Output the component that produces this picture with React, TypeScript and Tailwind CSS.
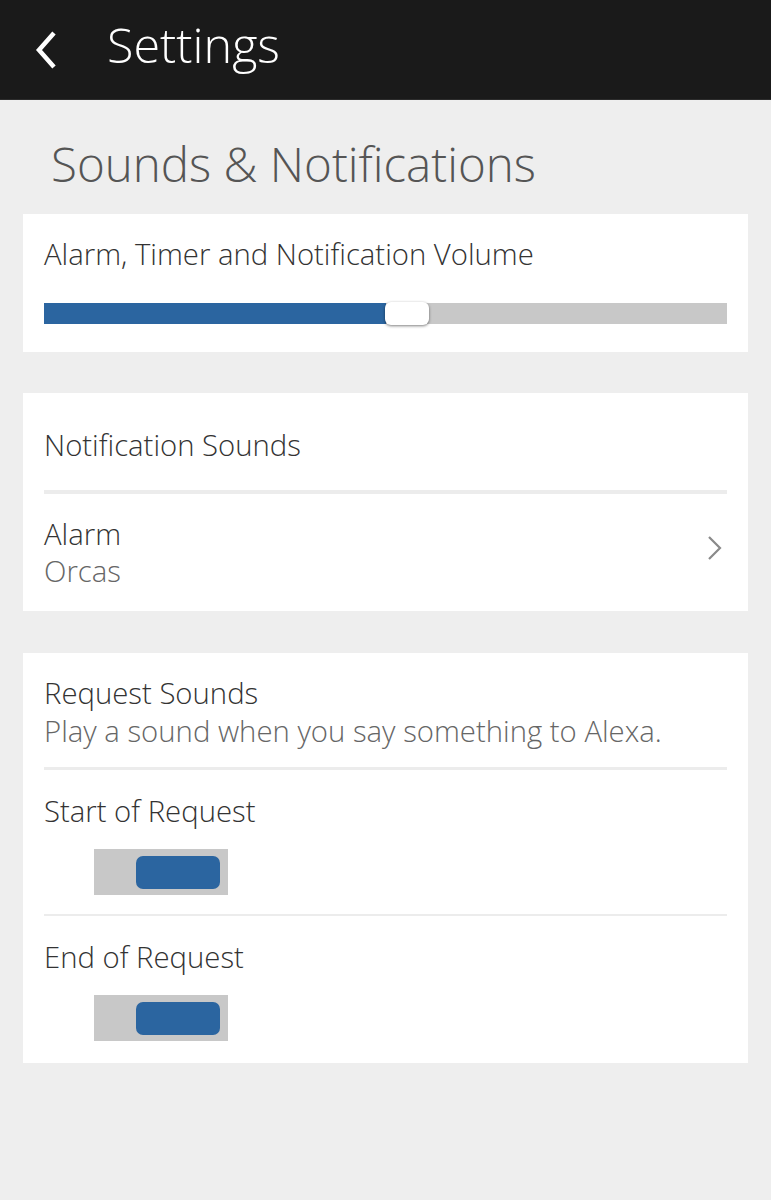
import React, { useState } from 'react';

const font = { fontFamily: '"Open Sans", "Noto Sans", sans-serif' };

const Toggle = ({ on, onClick }: { on: boolean; onClick: () => void }) => (
  <button
    onClick={onClick}
    className="ml-[50px] flex h-[46px] w-[134px] items-center bg-[#c8c8c8] px-[8px]"
  >
    <span
      className={
        'h-[33px] w-[84px] rounded-[7px] ' + (on ? 'ml-auto bg-[#2b65a0]' : 'bg-white')
      }
    />
  </button>
);

export default function App() {
  const [volume] = useState(50);
  const [startOn, setStartOn] = useState(true);
  const [endOn, setEndOn] = useState(true);

  return (
    <div className="min-h-[1200px] bg-[#eeeeee] font-light" style={font}>
      {/* header */}
      <div className="flex h-[100px] items-start border-b border-[#2c2c2c] bg-[#1a1a1a] pt-[13px]">
        <svg width="24" height="38" viewBox="0 0 24 38" className="ml-[34px] mt-[18px]">
          <path d="M20 2 L5 19 L20 36" fill="none" stroke="white" strokeWidth="4.5" />
        </svg>
        <h1 className="ml-[49px] text-[48.5px] leading-[62px] text-white">Settings</h1>
      </div>

      <h2 className="ml-[51px] mt-[33px] text-[47.5px] leading-[62px] text-[#555555]">
        Sounds &amp; Notifications
      </h2>

      {/* volume */}
      <div className="mx-[23px] mt-[19px] bg-white px-[21px] pt-[21px] pb-[28px]">
        <div className="text-[29.3px] leading-[38px] text-[#333333]">
          Alarm, Timer and Notification Volume
        </div>
        <div className="mt-[30px] flex h-[21px] items-center bg-[#c8c8c8]">
          <div className="h-full bg-[#2b65a0]" style={{ width: `${volume}%` }} />
          <div className="-ml-[1px] h-[23px] w-[44px] rounded-[6px] bg-white shadow-[0_1px_3px_rgba(0,0,0,0.5)]" />
        </div>
      </div>

      {/* notification sounds */}
      <div className="mx-[23px] mt-[41px] bg-white px-[21px] pt-[33px] pb-[21px]">
        <div className="text-[29.3px] leading-[38px] text-[#333333]">Notification Sounds</div>
        <div className="mt-[26px] h-[4px] bg-[#ececec]" />
        <div className="mt-[22px] flex items-center">
          <div className="flex-1">
            <div className="text-[29.3px] leading-[37px] text-[#333333]">Alarm</div>
            <div className="text-[29.3px] leading-[37px] text-[#666666]">Orcas</div>
          </div>
          <svg width="16" height="24" viewBox="0 0 16 24" className="mr-[4px] mb-[10px]">
            <path d="M2 1 L13 12 L2 23" fill="none" stroke="#8a8a8a" strokeWidth="2.2" />
          </svg>
        </div>
      </div>

      {/* request sounds */}
      <div className="mx-[23px] mt-[42px] bg-white px-[21px] pt-[21px] pb-[22px]">
        <div className="text-[29.3px] leading-[38px] text-[#333333]">Request Sounds</div>
        <div className="text-[29.3px] leading-[38px] text-[#666666]">
          Play a sound when you say something to Alexa.
        </div>
        <div className="mt-[17px] h-[3px] bg-[#ececec]" />
        <div className="mt-[22px] text-[29.3px] leading-[38px] text-[#333333]">Start of Request</div>
        <div className="mt-[19px]">
          <Toggle on={startOn} onClick={() => setStartOn(!startOn)} />
        </div>
        <div className="mt-[19px] h-[2px] bg-[#ececec]" />
        <div className="mt-[22px] text-[29.3px] leading-[38px] text-[#333333]">End of Request</div>
        <div className="mt-[19px]">
          <Toggle on={endOn} onClick={() => setEndOn(!endOn)} />
        </div>
      </div>
    </div>
  );
}
